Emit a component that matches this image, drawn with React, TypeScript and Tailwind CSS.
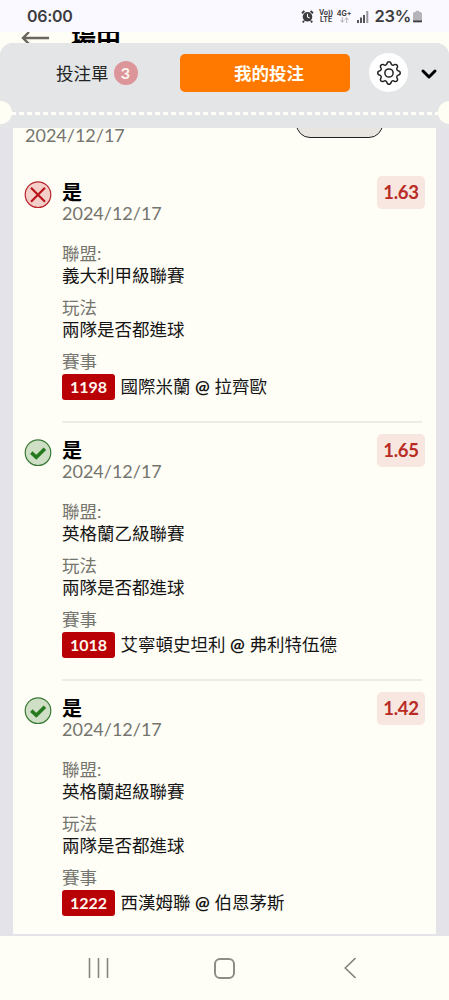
import { ChevronDown } from "lucide-react";
import { BsGear } from "react-icons/bs";

const bets = [
  { won: false, odds: "1.63", league: "義大利甲級聯賽", code: "1198", home: "國際米蘭", away: "拉齊歐" },
  { won: true, odds: "1.65", league: "英格蘭乙級聯賽", code: "1018", home: "艾寧頓史坦利", away: "弗利特伍德" },
  { won: true, odds: "1.42", league: "英格蘭超級聯賽", code: "1222", home: "西漢姆聯", away: "伯恩茅斯" },
];

function StatusBar() {
  return (
    <div className="relative z-10 flex h-8 shrink-0 items-center bg-[#f9f9ff] pl-[27px] pr-[27px] font-[Inter,sans-serif] text-[#3d3d3f]">
      <span className="text-[16px] font-semibold leading-none tracking-[-0.3px]">06:00</span>
      <div className="ml-auto flex items-center">
        <svg className="h-[13px] w-[13px]" viewBox="0 0 13 13" fill="none">
          <circle cx="6.5" cy="6.8" r="4.8" fill="#3d3d3f" />
          <path d="M1 3.2 3.4 1M12 3.2 9.6 1M3 11l-1.2 1.3M10 11l1.2 1.3" stroke="#3d3d3f" strokeWidth="1.9" />
          <path d="M6.5 3.8V7l2.2 1" stroke="#f9f9ff" strokeWidth="1.1" />
        </svg>
        <div className="ml-[6px] w-[13px] text-center text-[7px] font-bold leading-[7px]">
          <div className="-mx-1">Vo))</div>
          <div className="-mx-1">LTE</div>
        </div>
        <div className="ml-[5px] w-[13px] text-center text-[7px] font-bold leading-[7px]">
          <div className="-mx-1">4G+</div>
          <svg className="mx-auto h-[6px] w-[9px]" viewBox="0 0 9 6" fill="none" stroke="#a5a5aa">
            <path d="M2.3 0v5M.5 3.3l1.8 2 1.8-2M6.7 6V1M4.9 2.7l1.8-2 1.8 2" strokeWidth=".9" />
          </svg>
        </div>
        <svg className="ml-[6px] h-[13px] w-[12px]" viewBox="0 0 12 13">
          <path d="M0 10h2v3H0zM3 7.5h2V13H3zM6 5h2v8H6z" fill="#555558" />
          <path d="M9.3 1h2v12h-2z" fill="#99999d" />
        </svg>
        <span className="ml-[6px] text-[16.5px] font-semibold leading-none tracking-[-0.3px]">23%</span>
        <svg className="ml-[2px] h-[13px] w-[9px]" viewBox="0 0 10 13">
          <path d="M3 0h4v1.5h1.5L10 3v10H0V3l1.5-1.5H3z" fill="#b4b4b9" />
          <path d="M0 11h10v1.2l-.8.8H.8L0 12.2z" fill="#3d3d3f" />
        </svg>
      </div>
    </div>
  );
}

function SheetHeader() {
  return (
    <div className="relative h-[85px] shrink-0 bg-[#e3e5e6]">
      <div className="flex h-[59px] items-center">
        <div className="flex w-[180px] items-center pl-14">
          <span className="mt-[3px] text-[17.5px] leading-none text-[#222]">投注單</span>
          <span className="ml-[5px] flex h-6 w-6 items-center justify-center rounded-full bg-[#dc969a] text-[16px] font-bold leading-none text-[#fff8f0]">3</span>
        </div>
        <button className="h-[38px] w-[170px] rounded-[5px] bg-[#ff7900] pl-[8px] pt-[2px] text-[17.5px] font-bold leading-none text-[#fffdf4]">我的投注</button>
        <button className="ml-[19px] flex h-[39px] w-[39px] items-center justify-center rounded-full bg-white">
          <BsGear className="h-6 w-6 text-[#222]" />
        </button>
        <ChevronDown className="ml-[9px] mt-[2px] h-6 w-6 text-black" strokeWidth={3} />
      </div>
      <div className="absolute left-[11px] right-[11px] top-[69px] h-[3px] bg-[repeating-linear-gradient(90deg,#fffef8_0_5px,transparent_5px_8px)]" />
      <div className="absolute -left-[11px] top-[58px] h-[23px] w-[23px] rounded-full bg-[#fffef4]" />
      <div className="absolute -right-[12px] top-[58px] h-[23px] w-[23px] rounded-full bg-[#fffef4]" />
    </div>
  );
}

function ResultIcon({ won }: { won: boolean }) {
  return won ? (
    <svg className="h-7 w-7" viewBox="0 0 28 28" fill="none">
      <circle cx="14" cy="13.7" r="12.8" fill="#cfdfc5" stroke="#397a36" strokeWidth="1.2" />
      <path d="m7.3 13.6 5 4.6 8.6-8.4" stroke="#267a1e" strokeWidth="3.6" />
    </svg>
  ) : (
    <svg className="h-7 w-7" viewBox="0 0 28 28" fill="none">
      <circle cx="14" cy="13.7" r="12.8" fill="#f4cfc9" stroke="#b8242a" strokeWidth="1.2" />
      <path d="m7 6.7 14 14M21 6.7l-14 14" stroke="#b91419" strokeWidth="2.2" />
    </svg>
  );
}

function Field({ label, value }: { label: string; value: string }) {
  return (
    <div className="mb-[10px] text-[17.5px] leading-[22px]">
      <div className="text-[#75756f]">{label}</div>
      <div className="text-[#151515]">{value}</div>
    </div>
  );
}

function BetRow({ bet, last }: { bet: (typeof bets)[number]; last: boolean }) {
  return (
    <div className="flex h-[258px] pl-[11px] pt-[17px]">
      <ResultIcon won={bet.won} />
      <div className={`ml-[10px] mr-[14px] h-[242px] flex-1 ${last ? "" : "border-b-2 border-[#edebe6]"}`}>
        <div className="flex justify-between">
          <div>
            <div className="text-[20px] font-bold leading-[23px] text-black">是</div>
            <div className="-mt-px mb-px text-[18px] leading-[20px] text-[#75756f]">2024/12/17</div>
          </div>
          <div className="-mr-[3px] -mt-[5px] flex h-[33px] w-[48px] items-center justify-center rounded-[5px] bg-[#f8e6e0] text-[18.5px] font-bold leading-none tracking-[-0.3px] text-[#b92b25]">
            {bet.odds}
          </div>
        </div>
        <div className="mt-[19px]">
          <Field label="聯盟:" value={bet.league} />
          <Field label="玩法" value="兩隊是否都進球" />
          <div className="text-[17.5px] leading-[22px] text-[#75756f]">賽事</div>
          <div className="mt-px flex items-center text-[17.5px] leading-[26px] text-[#151515]">
            <span className="mr-[5.5px] h-[26px] w-[53px] rounded-[3px] bg-[#b90005] text-center text-[16px] font-bold text-[#fff8ee]">{bet.code}</span>
            <span className="whitespace-nowrap">
              {bet.home}
              <span className="mx-[4px] inline-block w-[16px] text-center text-[17.5px] font-bold leading-none">@</span>
              {bet.away}
            </span>
          </div>
        </div>
      </div>
    </div>
  );
}

export default function App() {
  return (
    <div className="flex h-[1000px] w-[449px] flex-col overflow-hidden bg-[#fffef6] font-[Lato,'Noto_Sans_CJK_TC',sans-serif]">
      <StatusBar />
      <div className="-mt-[6px] flex h-[17px] shrink-0 items-start overflow-hidden pl-[21px]">
        <svg className="mt-[2px] h-5 w-7 shrink-0" viewBox="0 0 28 20" fill="none" stroke="#68665e" strokeWidth="2.4">
          <path d="M28 10H2M8 4l-6 6 6 6" />
        </svg>
        <span className="-mt-[7px] ml-[22px] text-[25px] font-bold leading-[36px] text-black">場中</span>
      </div>
      <div className="flex h-[893px] shrink-0 flex-col overflow-hidden rounded-t-[13px] bg-[#e3e3e9]">
        <SheetHeader />
        <div className="mx-[13px] h-[806px] overflow-hidden bg-[#fffef6]">
          <div className="flex h-[36px] justify-between pl-[12px] pr-[53px]">
            <span className="-mt-[3px] text-[18px] leading-[20px] text-[#75756f]">2024/12/17</span>
            <div className="-mt-[18px] h-[28px] w-[87px] rounded-full border-[1.5px] border-[#222] bg-[#e8e5e0]" />
          </div>
          {bets.map((bet, i) => (
            <BetRow key={bet.code} bet={bet} last={i === bets.length - 1} />
          ))}
        </div>
      </div>
      <nav className="flex h-16 shrink-0 items-center bg-[#fffef6] pl-[88px]">
        <svg className="h-5 w-[21px]" viewBox="0 0 21 20" stroke="#858580" strokeWidth="1.6">
          <path d="M1.5 0v20M10.5 0v20M19.5 0v20" />
        </svg>
        <div className="ml-[105px] h-[21px] w-[21px] rounded-[6px] border-2 border-[#8d8d88]" />
        <svg className="ml-[109px] h-[22px] w-3" viewBox="0 0 12 22" fill="none" stroke="#858580" strokeWidth="1.6">
          <path d="M11.5 1 1.2 11l10.3 10" />
        </svg>
      </nav>
    </div>
  );
}
